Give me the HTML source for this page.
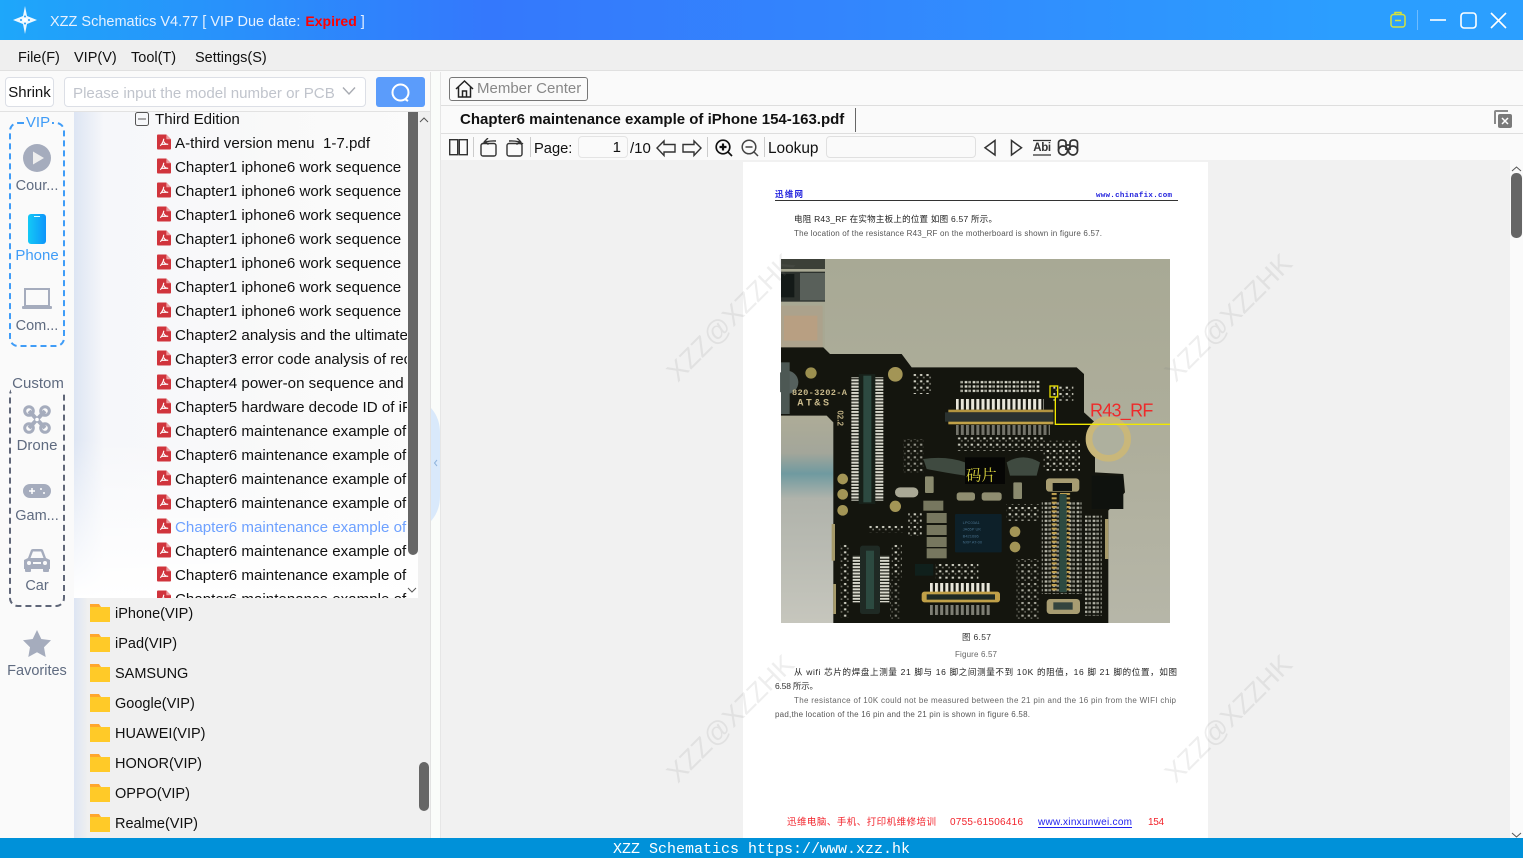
<!DOCTYPE html>
<html><head><meta charset="utf-8"><title>XZZ Schematics</title>
<style>
*{box-sizing:border-box}
html,body{margin:0;padding:0;width:1523px;height:858px;overflow:hidden;background:#fafafa}
body{font-family:"Liberation Sans","Noto Sans CJK SC",sans-serif;font-size:15px;color:#111;position:relative}
.a{position:absolute;white-space:nowrap}
.title{left:0;top:0;width:1523px;height:40px;background:linear-gradient(90deg,#1ea7fa 0,#3478fc 32%,#3385fd 55%,#2b9eff 88%,#2b9fff 100%)}
.menu{left:0;top:40px;width:1523px;height:31px;background:#efefef;border-bottom:1px solid #e0e0e0}
.m{top:49px;line-height:18px;font-size:14.5px;color:#111}
.box{border:1px solid #dcdfe6;border-radius:4px;background:#fff}
.side{left:0;top:112px;width:74px;height:726px;background:#fafafa}
.lab{left:5px;width:64px;text-align:center;font-size:14.5px;line-height:18px;color:#5f6b80}
.tree{left:74px;top:112px;width:344px;height:486px;overflow:hidden;background:linear-gradient(90deg,#dde5f3 0,#f6f7fa 30px,#f9f9f9 60%,#fbfbfb 100%)}
.tree:after{content:"";position:absolute;left:0;right:0;bottom:0;height:160px;background:linear-gradient(180deg,rgba(255,255,255,0),#fff)}
.r{left:175px;font-size:15.13px;line-height:20px;width:232px;overflow:hidden;z-index:2}
.rw{position:absolute;left:157px;width:14px;height:16px;z-index:2}
.lower{left:74px;top:598px;width:356px;height:240px;background:linear-gradient(90deg,#dde5f3 0,#f0f0f0 14px)}
.f{left:115px;font-size:14.5px;line-height:20px;color:#111}
.fi{position:absolute;left:90px;width:20px;height:18px}
.tb{top:139px;font-size:15px;line-height:20px;color:#111}
.sep{width:1px;background:#ccc;top:137px;height:20px}
</style></head><body>
<svg width="0" height="0" style="position:absolute"><defs>
<symbol id="pdf" viewBox="0 0 15 16"><path d="M1 0H10L15 5V15a1 1 0 0 1-1 1H1a1 1 0 0 1-1-1V1a1 1 0 0 1 1-1z" fill="#d0343c"/><path d="M10 0L15 5H10z" fill="#ee9a9e"/><path d="M7.3 4.500C7 6.500 6 9.500 3.500 12 M7.3 7.500C8 9.500 10 10.500 12 10.500 M4.500 10.500H10" stroke="#fff" stroke-width="1.2" fill="none"/></symbol>
<symbol id="fold" viewBox="0 0 20 18"><path d="M0 0H9L11 3H20V8H0z" fill="#ffa72e"/><rect y="3" width="20" height="15" fill="#ffca28"/></symbol>
<pattern id="pv" width="5" height="9.5" patternUnits="userSpaceOnUse"><rect width="33" height="6" fill="#d8d8cc"/></pattern>
<pattern id="ph" width="15.5" height="5" patternUnits="userSpaceOnUse"><rect width="9" height="30" fill="#e8e6da"/></pattern>
<pattern id="pvg" width="40" height="13" patternUnits="userSpaceOnUse"><rect width="30" height="6" fill="#c0a050"/></pattern>
<pattern id="dots" width="19" height="19" patternUnits="userSpaceOnUse"><rect x="2" y="3" width="7" height="6" fill="#cfcfc2"/><rect x="11" y="11" width="5" height="5" fill="#77776c"/></pattern>
<pattern id="dots2" width="24" height="13" patternUnits="userSpaceOnUse"><rect x="2" y="2" width="8" height="7" fill="#d8d8cb"/><rect x="13" y="2" width="8" height="7" fill="#a8a89c"/></pattern>
<linearGradient id="bgv" x1="0" y1="0" x2="0" y2="1"><stop offset="0" stop-color="#a8a995"/><stop offset=".5" stop-color="#aeae9b"/><stop offset="1" stop-color="#b6b6a8"/></linearGradient>
<linearGradient id="lf" x1="0" y1="0" x2="0" y2="1"><stop offset="0" stop-color="#aeac97"/><stop offset=".18" stop-color="#a3a69a"/><stop offset=".28" stop-color="#6f9aa0"/><stop offset=".4" stop-color="#b0b3ab"/><stop offset="1" stop-color="#c6c6bd"/></linearGradient>
<linearGradient id="ph1" x1="0" y1="0" x2="1" y2="0"><stop offset="0" stop-color="#13c9f6"/><stop offset="1" stop-color="#0e95fb"/></linearGradient>
</defs></svg>

<div class="a title"></div>
<svg class="a" style="left:12px;top:5px" width="26" height="30" viewBox="0 0 26 30"><path d="M13 1L15 11L25 15L15 19L13 29L11 19L1 15L11 11z" fill="#fff" opacity=".92"/><circle cx="13" cy="15" r="2" fill="#fff"/><circle cx="9" cy="15" r="1" fill="#2a9df5"/><circle cx="17" cy="15" r="1" fill="#2a9df5"/><circle cx="13" cy="11.500" r="1" fill="#2a9df5"/><circle cx="13" cy="18.500" r="1" fill="#2a9df5"/></svg>
<div class="a" style="left:50px;top:11px;font-size:14.5px;line-height:20px;color:#e6f1ff">XZZ Schematics V4.77 [ VIP Due date: <b style="color:#f00;font-size:14px;margin-left:1px">Expired</b> ]</div>
<svg class="a" style="left:1388px;top:10px" width="20" height="20" viewBox="0 0 20 20" fill="none" stroke="#d6e23c" stroke-width="1.5"><rect x="3" y="4.5" width="14" height="12.5" rx="2.5"/><path d="M7 4.5V2.5H13V4.500M7 10.500H13"/></svg>
<div class="a" style="left:1417px;top:10px;width:1px;height:20px;background:#6fbcff"></div>
<svg class="a" style="left:1428px;top:10px" width="82" height="20" viewBox="0 0 82 20" fill="none" stroke="#fff" stroke-width="1.6"><path d="M2 10H18"/><rect x="33" y="3" width="15" height="15" rx="3"/><path d="M63 3L78 18M78 3L63 18"/></svg>

<div class="a menu"></div>
<div class="a m" style="left:18px">File(F)</div><div class="a m" style="left:74px">VIP(V)</div><div class="a m" style="left:131px">Tool(T)</div><div class="a m" style="left:195px">Settings(S)</div>

<div class="a" style="left:0;top:71px;width:431px;height:41px;background:#fafafa;border-bottom:1px solid #e2e2e2"></div>
<div class="a box" style="left:5px;top:77px;width:49px;height:30px;font-size:15px;line-height:30px;text-align:center;color:#111">Shrink</div>
<div class="a box" style="left:64px;top:77px;width:302px;height:30px"></div>
<div class="a" style="left:73px;top:84px;font-size:15.1px;line-height:20px;color:#c0c4cc">Please input the model number or PCB</div>
<svg class="a" style="left:342px;top:86px" width="14" height="10" fill="none" stroke="#a8abb2" stroke-width="1.4"><path d="M1 1.500L7 8L13 1.500"/></svg>
<div class="a" style="left:376px;top:77px;width:49px;height:30px;background:#5b9cfb;border-radius:3px"></div>
<svg class="a" style="left:390px;top:82px" width="22" height="21" fill="none" stroke="#fff" stroke-width="2"><circle cx="10.500" cy="10.500" r="8"/><path d="M15 17L18 19"/></svg>

<div class="a side"></div>
<div class="a" style="left:9px;top:122px;width:56px;height:225px;border:2px dashed #3f9cf7;border-radius:9px"></div>
<div class="a" style="left:24px;top:114px;width:28px;background:#fafafa;text-align:center;font-size:15px;line-height:17px;color:#3f9cf7">VIP</div>
<svg class="a" style="left:23px;top:144px" width="28" height="28"><circle cx="14" cy="14" r="14" fill="#a5acbd"/><path d="M10 7.500L21 14L10 20.500z" fill="#eee"/></svg>
<div class="a lab" style="top:177px">Cour...</div>
<svg class="a" style="left:28px;top:214px" width="18" height="30"><rect width="18" height="30" rx="3" fill="url(#ph1)"/><rect x="6" y="2" width="6" height="1" fill="#dff"/></svg>
<div class="a lab" style="top:247px;color:#3f9cf7;font-size:15px">Phone</div>
<svg class="a" style="left:22px;top:288px" width="30" height="22" fill="none"><rect x="3" y="1" width="24" height="17" stroke="#a5acbd" stroke-width="2"/><rect y="18" width="30" height="3" rx="1" fill="#a5acbd"/></svg>
<div class="a lab" style="top:317px">Com...</div>
<div class="a" style="left:9px;top:386px;width:56px;height:221px;border:2px dashed #5f6678;border-radius:9px"></div>
<div class="a" style="left:11px;top:375px;width:54px;background:#fafafa;text-align:center;font-size:15px;line-height:17px;color:#5f6b80">Custom</div>
<svg class="a" style="left:23px;top:405px" width="28" height="29" fill="none" stroke="#a5acbd"><path d="M6 6L22 23M22 6L6 23" stroke-width="4"/><circle cx="6" cy="6" r="4.300" stroke-width="3"/><circle cx="22" cy="6" r="4.300" stroke-width="3"/><circle cx="6" cy="23" r="4.300" stroke-width="3"/><circle cx="22" cy="23" r="4.300" stroke-width="3"/><circle cx="14" cy="14.500" r="1.800" fill="#fff" stroke="none"/></svg>
<div class="a lab" style="top:437px;font-size:15px">Drone</div>
<svg class="a" style="left:23px;top:484px" width="28" height="14"><rect width="28" height="14" rx="7" fill="#a5acbd"/><path d="M6 7H12M9 4V10" stroke="#fff" stroke-width="1.5"/><circle cx="18" cy="5" r="1" fill="#fff"/><circle cx="21" cy="9" r="1" fill="#fff"/></svg>
<div class="a lab" style="top:507px">Gam...</div>
<svg class="a" style="left:23px;top:548px" width="28" height="24"><path d="M5 10L8 2Q8.500 1 10 1H18Q19.500 1 20 2L23 10L27 12V21H1V12z" fill="#a5acbd"/><path d="M7.500 10L10 3.500H18L20.500 10z" fill="#fafafa"/><rect x="2" y="20" width="6" height="4" rx="1" fill="#a5acbd"/><rect x="20" y="20" width="6" height="4" rx="1" fill="#a5acbd"/><circle cx="6" cy="15" r="2" fill="#fafafa"/><circle cx="22" cy="15" r="2" fill="#fafafa"/><rect x="10" y="14" width="8" height="2" fill="#fafafa"/></svg>
<div class="a lab" style="top:577px">Car</div>
<svg class="a" style="left:23px;top:630px" width="28" height="28"><path d="M14 0L18.300 9L28 10.300L21 17.200L22.700 27L14 22.300L5.300 27L7 17.200L0 10.300L9.700 9z" fill="#a5acbd"/></svg>
<div class="a lab" style="top:662px;left:2px;width:70px">Favorites</div>

<div class="a" style="left:418px;top:112px;width:12px;height:486px;background:#f0f0f0"></div>
<div class="a tree"></div>
<svg class="a" style="left:135px;top:112px;z-index:2" width="14" height="14" fill="none" stroke="#555"><rect x=".5" y=".5" width="13" height="13" rx="2"/><path d="M3 7H11"/></svg>
<div class="a" style="left:155px;top:110px;font-size:15.100px;line-height:20px;z-index:2">Third Edition</div>

<svg class="rw" style="top:134px"><use href="#pdf" width="14" height="16"/></svg><div class="a r" style="top:134px">A-third version menu&nbsp; 1-7.pdf</div>
<svg class="rw" style="top:158px"><use href="#pdf" width="14" height="16"/></svg><div class="a r" style="top:158px">Chapter1 iphone6 work sequence</div>
<svg class="rw" style="top:182px"><use href="#pdf" width="14" height="16"/></svg><div class="a r" style="top:182px">Chapter1 iphone6 work sequence</div>
<svg class="rw" style="top:206px"><use href="#pdf" width="14" height="16"/></svg><div class="a r" style="top:206px">Chapter1 iphone6 work sequence</div>
<svg class="rw" style="top:230px"><use href="#pdf" width="14" height="16"/></svg><div class="a r" style="top:230px">Chapter1 iphone6 work sequence</div>
<svg class="rw" style="top:254px"><use href="#pdf" width="14" height="16"/></svg><div class="a r" style="top:254px">Chapter1 iphone6 work sequence</div>
<svg class="rw" style="top:278px"><use href="#pdf" width="14" height="16"/></svg><div class="a r" style="top:278px">Chapter1 iphone6 work sequence</div>
<svg class="rw" style="top:302px"><use href="#pdf" width="14" height="16"/></svg><div class="a r" style="top:302px">Chapter1 iphone6 work sequence</div>
<svg class="rw" style="top:326px"><use href="#pdf" width="14" height="16"/></svg><div class="a r" style="top:326px">Chapter2 analysis and the ultimate</div>
<svg class="rw" style="top:350px"><use href="#pdf" width="14" height="16"/></svg><div class="a r" style="top:350px">Chapter3 error code analysis of rec</div>
<svg class="rw" style="top:374px"><use href="#pdf" width="14" height="16"/></svg><div class="a r" style="top:374px">Chapter4 power-on sequence and</div>
<svg class="rw" style="top:398px"><use href="#pdf" width="14" height="16"/></svg><div class="a r" style="top:398px">Chapter5 hardware decode ID of iP</div>
<svg class="rw" style="top:422px"><use href="#pdf" width="14" height="16"/></svg><div class="a r" style="top:422px">Chapter6 maintenance example of</div>
<svg class="rw" style="top:446px"><use href="#pdf" width="14" height="16"/></svg><div class="a r" style="top:446px">Chapter6 maintenance example of</div>
<svg class="rw" style="top:470px"><use href="#pdf" width="14" height="16"/></svg><div class="a r" style="top:470px">Chapter6 maintenance example of</div>
<svg class="rw" style="top:494px"><use href="#pdf" width="14" height="16"/></svg><div class="a r" style="top:494px">Chapter6 maintenance example of</div>
<svg class="rw" style="top:518px"><use href="#pdf" width="14" height="16"/></svg><div class="a r" style="top:518px;color:#6ea1ff">Chapter6 maintenance example of</div>
<svg class="rw" style="top:542px"><use href="#pdf" width="14" height="16"/></svg><div class="a r" style="top:542px">Chapter6 maintenance example of</div>
<svg class="rw" style="top:566px"><use href="#pdf" width="14" height="16"/></svg><div class="a r" style="top:566px">Chapter6 maintenance example of</div>
<svg class="rw" style="top:590px;height:8px"><use href="#pdf" width="14" height="16"/></svg><div class="a r" style="top:590px;height:8px">Chapter6 maintenance example of</div>

<div class="a" style="left:408px;top:112px;width:10px;height:443px;background:#666;border-radius:0 0 5px 5px;z-index:3"></div>
<svg class="a" style="left:419px;top:116px" width="10" height="8" fill="none" stroke="#555"><path d="M1 6L5 2L9 6"/></svg>
<svg class="a" style="left:407px;top:586px;z-index:3" width="10" height="8" fill="none" stroke="#555"><path d="M1 2L5 6L9 2"/></svg>

<div class="a lower"></div>
<svg class="fi" style="top:604px"><use href="#fold" width="20" height="18"/></svg><div class="a f" style="top:604px">iPhone(VIP)</div>
<svg class="fi" style="top:634px"><use href="#fold" width="20" height="18"/></svg><div class="a f" style="top:634px">iPad(VIP)</div>
<svg class="fi" style="top:664px"><use href="#fold" width="20" height="18"/></svg><div class="a f" style="top:664px">SAMSUNG</div>
<svg class="fi" style="top:694px"><use href="#fold" width="20" height="18"/></svg><div class="a f" style="top:694px">Google(VIP)</div>
<svg class="fi" style="top:724px"><use href="#fold" width="20" height="18"/></svg><div class="a f" style="top:724px">HUAWEI(VIP)</div>
<svg class="fi" style="top:754px"><use href="#fold" width="20" height="18"/></svg><div class="a f" style="top:754px">HONOR(VIP)</div>
<svg class="fi" style="top:784px"><use href="#fold" width="20" height="18"/></svg><div class="a f" style="top:784px">OPPO(VIP)</div>
<svg class="fi" style="top:814px"><use href="#fold" width="20" height="18"/></svg><div class="a f" style="top:814px">Realme(VIP)</div>
<div class="a" style="left:419px;top:762px;width:10px;height:49px;background:#666;border-radius:5px"></div>

<div class="a" style="left:430px;top:72px;width:1px;height:766px;background:#e2e2e2"></div>
<div class="a" style="left:431px;top:72px;width:10px;height:766px;background:#fafcfa"></div>
<div class="a" style="left:440px;top:72px;width:1px;height:766px;background:#e6e6e6"></div>
<svg class="a" style="left:431px;top:408px" width="10" height="113"><path d="M0 0Q9 10 9 25V88Q9 103 0 113z" fill="#d9e9fb"/><path d="M6 52L3.500 55L6 58" stroke="#8fb4dd" fill="none"/></svg>

<!-- right header -->
<div class="a" style="left:441px;top:105px;width:1082px;height:1px;background:#dedede"></div>
<div class="a" style="left:441px;top:133px;width:1082px;height:1px;background:#dedede"></div>
<div class="a" style="left:449px;top:77px;width:139px;height:24px;border:1px solid #777;border-radius:3px;background:#fafafa"></div>
<svg class="a" style="left:455px;top:79px" width="19" height="20" fill="none" stroke="#222" stroke-width="1.5"><path d="M1 10L9.500 2L18 10M3.500 8V18H15.500V8M7.500 18V12H11.500V18"/></svg>
<div class="a" style="left:477px;top:79px;font-size:15px;line-height:20px;color:#888">Member Center</div>
<div class="a" style="left:460px;top:110px;font-size:15px;line-height:20px;font-weight:bold;color:#111">Chapter6 maintenance example of iPhone 154-163.pdf</div>
<div class="a" style="left:855px;top:108px;width:1px;height:24px;background:#666"></div>
<svg class="a" style="left:1494px;top:110px" width="18" height="18"><path d="M1 14V2a1 1 0 0 1 1-1H14" fill="none" stroke="#8a8a8a" stroke-width="2"/><rect x="4" y="4" width="14" height="14" rx="2" fill="#7a7a7a"/><path d="M8 8L14 14M14 8L8 14" stroke="#fff" stroke-width="1.500"/></svg>

<!-- pdf toolbar -->
<svg class="a" style="left:449px;top:138px" width="320" height="20" fill="none" stroke="#333" stroke-width="1.400">
<rect x=".7" y="1.700" width="8" height="15"/><rect x="10.300" y="1.700" width="8" height="15"/>
<rect x="32" y="5.500" width="15" height="12.500" rx="2"/><path d="M33 6Q37 2.500 47 3M39 0L35.500 3.500L39.500 6.500"/>
<rect x="58" y="5.500" width="15" height="12.500" rx="2"/><path d="M74 6Q70 2.500 60 3M68 0L71.500 3.500L67.500 6.500"/>
<path d="M208 10L215 3V6.500H226V14H215V17.500zM252 10L245 3V6.500H234V14H245V17.500z"/>
<g stroke="#111" stroke-width="1.700"><circle cx="274" cy="9" r="6.800"/><path d="M279 14L283 18"/><path d="M270.500 9H277.500M274 5.500V12.500" stroke-width="2.200"/></g>
<g stroke="#444" stroke-width="1.500"><circle cx="300" cy="9" r="6.800"/><path d="M305 14L309 18M296.500 9H303.500"/></g>
</svg>
<div class="a sep" style="left:473px"></div><div class="a sep" style="left:530px"></div><div class="a sep" style="left:707px"></div><div class="a sep" style="left:764px"></div>
<div class="a tb" style="left:534px;font-size:14.700px">Page:</div>
<div class="a box" style="left:578px;top:136px;width:50px;height:22px;background:#fafafa;border-color:#e4e4e4;text-align:right;padding-right:6px;font-size:15px;line-height:22px">1</div>
<div class="a tb" style="left:630px">/10</div>
<div class="a tb" style="left:768px;font-size:15.400px">Lookup</div>
<div class="a box" style="left:826px;top:136px;width:150px;height:22px;background:#fafafa;border-color:#e0e0e0"></div>
<svg class="a" style="left:983px;top:138px" width="100" height="20" fill="none" stroke="#333" stroke-width="1.500"><path d="M12 2.500V17L2 9.800zM28.500 2.500V17L38.500 9.800z"/><path d="M50 2.500H68M50 17H68" stroke-width="1.200"/><g stroke-width="1.700"><circle cx="80" cy="12.500" r="4.500"/><circle cx="90" cy="12.500" r="4.500"/><path d="M75.500 12.500V5Q75.500 2 79 2Q83 2 83 5V12M94.500 12.500V5Q94.500 2 91 2Q87 2 87 5V12M83 7H87"/></g></svg>
<div class="a" style="left:1033px;top:141px;width:18px;text-align:center;font-size:11.500px;font-weight:bold;line-height:14px;color:#333;letter-spacing:-.3px">Abi</div>

<!-- viewer -->
<div class="a" style="left:441px;top:160px;width:1069px;height:678px;background:#f1f1f1"></div>
<div class="a" style="left:743px;top:162px;width:465px;height:676px;background:#fff"></div>

<!-- PDF text -->
<svg class="a" style="left:743px;top:162px" width="465" height="676" font-family="'Liberation Sans','Noto Sans CJK SC',sans-serif">
<text x="32" y="35" font-size="8.500" font-weight="bold" fill="#2222dd" font-family="'Noto Sans CJK SC',sans-serif" textLength="28">迅维网</text>
<text x="353" y="35" font-size="7.500" font-weight="bold" fill="#2222dd" font-family="'Liberation Mono',monospace" textLength="76">www.chinafix.com</text>
<rect x="32" y="38" width="403" height="1" fill="#333"/>
<text x="51" y="60" font-size="8.500" fill="#222" textLength="203">电阻 R43_RF 在实物主板上的位置 如图 6.57 所示。</text>
<text x="51" y="74" font-size="8" fill="#555" textLength="308">The location of the resistance R43_RF on the motherboard is shown in figure 6.57.</text>
<text x="219" y="478" font-size="8.500" fill="#333" textLength="29">图 6.57</text>
<text x="212" y="495" font-size="8" fill="#666" textLength="42">Figure 6.57</text>
<text x="51" y="513" font-size="8.500" fill="#222" textLength="383">从 wifi 芯片的焊盘上测量 21 脚与 16 脚之间测量不到 10K 的阻值，16 脚 21 脚的位置，如图</text>
<text x="32" y="527" font-size="8.500" fill="#333" textLength="43">6.58 所示。</text>
<text x="51" y="541" font-size="8" fill="#666" textLength="382">The resistance of 10K could not be measured between the 21 pin and the 16 pin from the WIFI chip</text>
<text x="32" y="555" font-size="8" fill="#555" textLength="255">pad,the location of the 16 pin and the 21 pin is shown in figure 6.58.</text>
<text x="44" y="663" font-size="9.500" fill="#f2232b" textLength="149">迅维电脑、手机、打印机维修培训</text>
<text x="207" y="663" font-size="10" fill="#f2232b" textLength="73">0755-61506416</text>
<text x="295" y="663" font-size="10" fill="#2222ee" textLength="94">www.xinxunwei.com</text>
<rect x="295" y="665" width="94" height="1" fill="#2222ee"/>
<text x="405" y="663" font-size="10" fill="#f2232b" textLength="16">154</text>
</svg>

<!-- PCB photo -->
<svg class="a" style="left:780px;top:259px" width="390" height="364" viewBox="0 0 1170 1092" preserveAspectRatio="none">
<rect x="3" width="1167" height="1092" fill="url(#bgv)"/>
<rect x="3" y="470" width="160" height="622" fill="url(#lf)"/>
<rect x="3" y="0" width="132" height="285" fill="#a8a893"/>
<rect x="3" y="0" width="132" height="30" fill="#3c4038"/>
<rect x="3" y="38" width="132" height="90" fill="#2d322e"/><rect x="60" y="42" width="75" height="82" fill="#59605a"/><rect x="3" y="45" width="40" height="70" fill="#141a18"/>
<rect x="3" y="140" width="125" height="127" rx="4" fill="#aca28c"/><rect x="12" y="170" width="100" height="75" fill="#bb9f80" opacity=".8"/>
<path d="M3 265H130L150 285H365L395 325H890L912 345V460L945 490V640L1030 645L1035 700L985 755V1092H160V490L140 470H3z" fill="#14150e"/>
<circle cx="20" cy="370" r="35" fill="#55605d"/><rect x="3" y="310" width="26" height="155" fill="#4d5854"/>
<circle cx="93" cy="342" r="17" fill="#9b8f4f"/><circle cx="346" cy="346" r="22" fill="#a39556"/>
<text x="36" y="408" font-size="26" font-weight="bold" fill="#c8b98b" font-family="'Liberation Mono',monospace" textLength="165">820-3202-A</text>
<text x="52" y="440" font-size="30" font-weight="bold" fill="#c8b98b" font-family="'Liberation Mono',monospace" textLength="95">AT&amp;S</text>
<text x="172" y="470" font-size="24" font-weight="bold" fill="#bfb084" transform="rotate(90 180 462)">02.2</text>
<!-- left connector -->
<rect x="214" y="355" width="96" height="370" fill="url(#pv)"/><rect x="236" y="345" width="50" height="390" fill="#172019"/><rect x="250" y="350" width="24" height="380" fill="#2d4a41"/>
<circle cx="188" cy="660" r="16" fill="#a39556"/><circle cx="188" cy="706" r="16" fill="#a39556"/><circle cx="188" cy="754" r="16" fill="#a39556"/><circle cx="346" cy="742" r="17" fill="#a39556"/>
<rect x="345" y="685" width="70" height="30" rx="15" fill="#a9a895"/>
<rect x="400" y="345" width="55" height="60" fill="url(#dots)"/>
<!-- top connector -->
<rect x="540" y="365" width="240" height="38" fill="url(#dots2)"/>
<rect x="528" y="420" width="264" height="32" fill="url(#ph)"/>
<rect x="505" y="452" width="315" height="8" fill="#b29540"/>
<rect x="495" y="460" width="325" height="28" fill="#2a3230"/>
<rect x="505" y="488" width="315" height="8" fill="#c2a248"/>
<rect x="528" y="498" width="282" height="30" fill="url(#ph)" opacity=".45"/>
<rect x="530" y="535" width="260" height="40" fill="url(#dots)"/>
<rect x="370" y="540" width="60" height="100" fill="url(#dots)" opacity=".7"/>
<rect x="820" y="380" width="60" height="45" fill="url(#dots)"/>
<!-- centre -->
<rect x="555" y="595" width="120" height="80" fill="#060605"/><path d="M430 600Q500 590 555 610V650Q490 640 440 630z" fill="#3f4a40"/><path d="M680 610Q730 580 780 610L770 650H690z" fill="#3f4a40"/>
<rect x="700" y="670" width="26" height="50" rx="3" fill="#8a8a6e"/><rect x="435" y="652" width="26" height="50" rx="3" fill="#8a8a6e"/>
<rect x="530" y="700" width="55" height="25" rx="8" fill="#8f8d70"/><rect x="605" y="700" width="60" height="25" rx="8" fill="#8f8d70"/>
<rect x="790" y="545" width="110" height="90" fill="url(#dots)"/>
<rect x="430" y="725" width="60" height="30" fill="#77775f"/><rect x="440" y="762" width="60" height="30" fill="#77775f"/><rect x="440" y="798" width="60" height="30" fill="#77775f"/><rect x="440" y="834" width="60" height="30" fill="#77775f"/><rect x="440" y="868" width="60" height="30" fill="#77775f"/>
<rect x="385" y="760" width="40" height="70" fill="url(#dots)"/>
<rect x="268" y="795" width="100" height="25" fill="url(#dots)"/>
<rect x="525" y="765" width="140" height="115" rx="3" fill="#0d2029"/>
<text x="548" y="795" font-size="12" fill="#47708c">LPC03A1</text><text x="548" y="815" font-size="12" fill="#47708c">JA65P UK</text><text x="548" y="835" font-size="12" fill="#47708c">B421686</text><text x="548" y="853" font-size="12" fill="#47708c">NXP AT-00</text>
<circle cx="705" cy="818" r="16" fill="#a39556"/><circle cx="705" cy="864" r="16" fill="#a39556"/>
<rect x="680" y="735" width="100" height="50" fill="url(#dots)"/>
<rect x="710" y="900" width="70" height="180" fill="url(#dots)" opacity=".8"/>
<!-- right connector -->
<rect x="785" y="725" width="120" height="280" fill="url(#dots2)" opacity=".8"/><rect x="815" y="700" width="60" height="300" fill="url(#pvg)"/><rect x="838" y="705" width="22" height="295" fill="#2d4a41"/>
<rect x="798" y="658" width="100" height="40" rx="10" fill="#a89d72"/><rect x="818" y="672" width="58" height="24" fill="#11130e"/>
<rect x="800" y="1020" width="100" height="45" rx="10" fill="#a89d72"/><rect x="820" y="1030" width="58" height="22" fill="#33443e"/>
<rect x="915" y="770" width="50" height="300" fill="url(#dots2)" opacity=".8"/>
<rect x="935" y="650" width="95" height="100" fill="#0f120e"/>
<rect x="975" y="780" width="10" height="120" fill="#a69a6a"/><rect x="155" y="795" width="10" height="110" fill="#a69a6a"/><rect x="160" y="975" width="8" height="90" fill="#a69a6a"/>
<!-- bottom -->
<rect x="180" y="855" width="30" height="220" fill="url(#dots)"/><rect x="335" y="855" width="30" height="100" fill="url(#dots)"/>
<rect x="218" y="890" width="110" height="140" fill="url(#pv)"/><rect x="240" y="860" width="60" height="205" rx="8" fill="#1f2a24"/><rect x="258" y="875" width="24" height="175" fill="#2c4a40"/>
<rect x="465" y="915" width="130" height="45" fill="url(#dots)"/><rect x="405" y="915" width="55" height="35" fill="#10201c"/>
<rect x="450" y="972" width="180" height="30" fill="url(#ph)"/><rect x="425" y="998" width="235" height="32" rx="8" fill="#c0a048"/><rect x="440" y="1006" width="205" height="16" fill="#1e2a24"/><rect x="450" y="1038" width="180" height="30" fill="url(#ph)" opacity=".5"/>
<rect x="330" y="960" width="30" height="120" fill="url(#dots)" opacity=".6"/>
<!-- ring -->
<circle cx="985" cy="540" r="58" fill="#aeb09e" stroke="#c9b77a" stroke-width="20"/>
<!-- annotations -->
<rect x="810" y="381" width="23" height="33" fill="none" stroke="#e8e000" stroke-width="4"/>
<path d="M826 414V496H1170" fill="none" stroke="#f0e800" stroke-width="4"/>
<text x="930" y="473" font-size="54" fill="#ee2a2a" font-family="'Liberation Sans',sans-serif" textLength="190">R43_RF</text>
<text x="558" y="665" font-size="46" fill="#dcd640" font-family="'Noto Serif CJK SC',serif" textLength="92">码片</text>
</svg>

<!-- watermarks -->
<div class="a" style="left:0;top:0;width:1523px;height:858px;pointer-events:none;overflow:hidden">
<div class="a" style="left:650px;top:305px;width:146px;font-size:27px;line-height:40px;color:rgba(120,120,120,.13);transform:rotate(-45deg)">XZZ@XZZHK</div>
<div class="a" style="left:1148px;top:305px;width:146px;font-size:27px;line-height:40px;color:rgba(120,120,120,.13);transform:rotate(-45deg)">XZZ@XZZHK</div>
<div class="a" style="left:650px;top:706px;width:146px;font-size:27px;line-height:40px;color:rgba(120,120,120,.13);transform:rotate(-45deg)">XZZ@XZZHK</div>
<div class="a" style="left:1148px;top:706px;width:146px;font-size:27px;line-height:40px;color:rgba(120,120,120,.13);transform:rotate(-45deg)">XZZ@XZZHK</div>
</div>

<!-- right scrollbar -->
<svg class="a" style="left:1511px;top:165px" width="11" height="7" fill="none" stroke="#555"><path d="M1 6L5.500 2L10 6"/></svg>
<div class="a" style="left:1511px;top:173px;width:11px;height:65px;background:#666;border-radius:5px"></div>
<svg class="a" style="left:1511px;top:832px" width="11" height="6" fill="none" stroke="#555"><path d="M1 1L5.500 5L10 1"/></svg>

<!-- status -->
<div class="a" style="left:0;top:838px;width:1523px;height:20px;background:#0091d9"></div>
<div class="a" style="left:613px;top:840px;font-family:'Liberation Mono',monospace;font-size:15px;line-height:19px;color:#fff">XZZ Schematics https://www.xzz.hk</div>
</body></html>
